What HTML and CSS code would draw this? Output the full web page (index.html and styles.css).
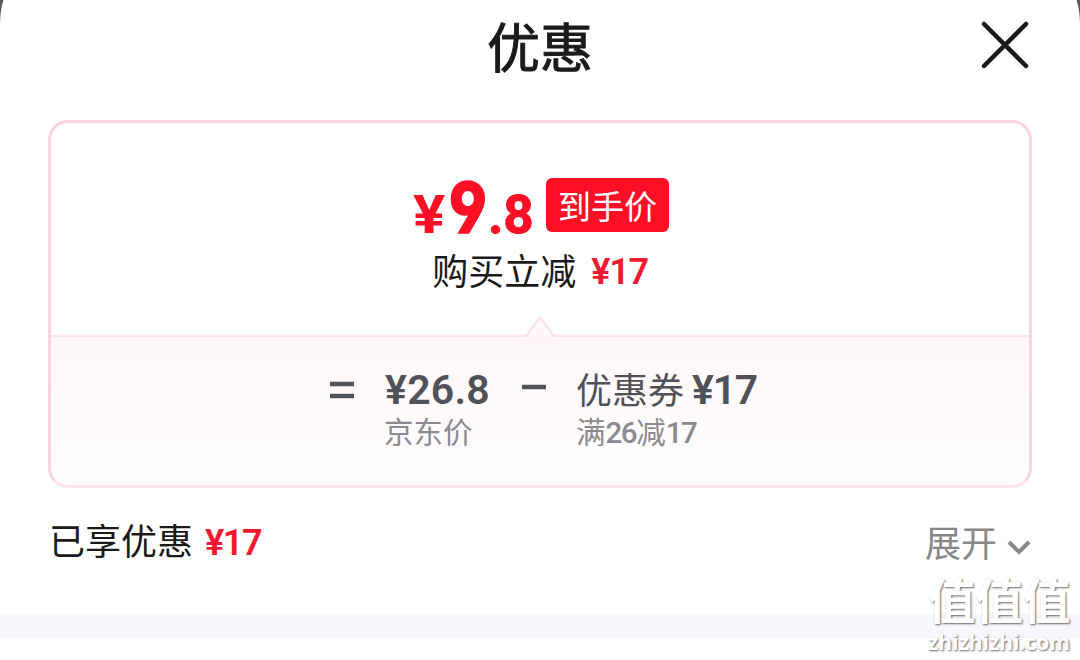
FILE: index.html
```
<!DOCTYPE html>
<html lang="zh-CN">
<head>
  <meta charset="UTF-8" />
  <meta name="viewport" content="width=device-width, initial-scale=1.0"/>
  <title>优惠</title>
  <link rel="stylesheet" href="styles.css">
</head>
<body>
  <div class="sheet">
    <header class="header">
      <h1>优惠</h1>
      <svg class="close" viewBox="0 0 48 48"><path d="M3 3L45 45M45 3L3 45" /></svg>
    </header>

    <!-- Price card -->
    <div class="card">
      <div class="summary">
        <div class="final">
          <span class="yen">¥</span><span class="big">9</span><span class="decimal">.8</span>
          <span class="tag">到手价</span>
        </div>
        <div class="saving">购买立减 <span class="num red">¥17</span></div>
      </div>
      <div class="formula">
        <svg class="arrow" viewBox="0 0 30 22"><path class="fill" d="M1 22L15 2L29 22Z" /><path class="line" d="M0 20.5H1.5L15 2L28.5 20.5H30" /></svg>
        <svg class="operator" viewBox="0 0 24 20"><path d="M0 3H24M0 15H24" /></svg>
        <div class="item origin">
          <div class="value"><span class="num">¥26.8</span></div>
          <div class="note">京东价</div>
        </div>
        <svg class="operator" viewBox="0 0 24 20"><path d="M0 6H24" /></svg>
        <div class="item coupon">
          <div class="value">优惠券<span class="num">¥17</span></div>
          <div class="note">满<b>26</b>减<b>17</b></div>
        </div>
      </div>
    </div>

    <div class="enjoyed">
      <div>已享优惠 <span class="num red">¥17</span></div>
      <div class="expand">展开 <svg viewBox="0 0 26 16"><path d="M3 3L13 13L23 3" /></svg></div>
    </div>
    <div class="divider"></div>
  </div>

  <!-- Watermark -->
  <div class="watermark">
    <div class="mark">值值值</div>
    <div class="site">zhizhizhi.com</div>
  </div>
</body>
</html>
```
FILE: styles.css
```
* {
  box-sizing: border-box;
}

body {
  margin: 0;
  height: 660px;
  overflow: hidden;
  position: relative;
  background: #59595b;
  color: #1a1a1a;
  font-family: Roboto, "Noto Sans CJK SC", sans-serif;
}

svg {
  fill: none;
  stroke: currentColor;
}

.sheet {
  height: 670px;
  margin-top: -10px;
  padding-top: 10px;
  border-radius: 12px 12px 0 0 / 34px 34px 0 0;
  background: #fff;
}

.header {
  height: 120px;
  display: grid;
  grid-template-columns: 1fr auto 1fr;
  padding: 0 51px;
}

h1 {
  grid-column: 2;
  margin: 12px 0 0;
  font-size: 53px;
  line-height: 76px;
  font-weight: 400;
  -webkit-text-stroke: 1px #1a1a1a;
}

.close {
  width: 48px;
  height: 48px;
  margin-top: 21px;
  justify-self: end;
  stroke-width: 4.5;
  stroke-linecap: round;
}

.card {
  height: 368px;
  margin: 0 48px;
  border: 3px solid #fdd5e0;
  border-bottom-color: #fde3ea;
  border-radius: 20px;
}

.summary {
  height: 212px;
  padding-top: 55px;
}

.final {
  display: flex;
  justify-content: center;
  height: 71px;
  padding-left: 2px;
  color: #fd1026;
  font-weight: 700;
}

.yen,
.decimal {
  font-size: 53px;
  line-height: 74px;
}

.yen {
  width: 36px;
  transform: scaleX(1.14);
  transform-origin: left;
}

.big {
  width: 39px;
  font-family: Inter, sans-serif;
  font-feature-settings: "ss01";
  font-size: 70px;
  font-weight: 800;
  line-height: 60px;
  -webkit-text-stroke: 1.5px #fd1026;
  transform: scaleX(0.86);
  transform-origin: left;
}

.decimal {
  width: 58px;
  -webkit-text-stroke: 1px #fd1026;
}

.tag {
  width: 123px;
  height: 54px;
  border-radius: 6px;
  background: #fd1026;
  color: #fff;
  font-size: 33px;
  line-height: 59px;
  font-weight: 400;
  text-align: center;
}

.saving {
  display: flex;
  justify-content: center;
  gap: 15px;
  font-size: 36px;
  line-height: 48px;
}

.saving .num {
  line-height: 46px;
}

.num {
  font-weight: 600;
  letter-spacing: -1.3px;
}

.red {
  color: #f31730;
}

.formula {
  height: 150px;
  position: relative;
  display: flex;
  justify-content: center;
  padding: 29px 0 0 6px;
  border-top: 2px solid #fde5eb;
  border-radius: 0 0 17px 17px;
  background: linear-gradient(#fff7f8, #fffcfd 80%);
  color: #505259;
}

.arrow {
  position: absolute;
  top: -22px;
  left: 474px;
  width: 30px;
  height: 22px;
}

.arrow .fill {
  fill: #fff7f8;
  stroke: none;
}

.arrow .line {
  stroke: #fde5eb;
  stroke-width: 2.5;
}

.operator {
  width: 26px;
  height: 20px;
  margin-top: 15px;
  stroke-width: 4.5;
}

.item {
  margin-left: 29px;
}

.origin {
  width: 137px;
}

.origin .num {
  margin-left: 1px;
  letter-spacing: 0.2px;
}

.coupon .num {
  margin-left: 8px;
}

.value {
  height: 47px;
  font-size: 36px;
  line-height: 48px;
  white-space: nowrap;
}

.value .num {
  font-size: 41px;
}

.note {
  color: #8a8b92;
  font-size: 29.5px;
  line-height: 40px;
}

.note b {
  font-weight: 500;
  letter-spacing: -1.5px;
}

.enjoyed {
  display: flex;
  justify-content: space-between;
  height: 126px;
  padding: 28px 48px 0 49px;
  font-size: 36px;
  line-height: 54px;
}

.enjoyed .num {
  margin-left: 3px;
}

.expand {
  padding-top: 2px;
  color: #888;
}

.expand svg {
  width: 26px;
  height: 16px;
  stroke-width: 4;
  vertical-align: 2px;
}

.divider {
  height: 24px;
  background: #f6f7fc;
}

.watermark {
  position: absolute;
  right: 9px;
  bottom: 0;
  width: 143px;
  height: 84px;
  color: #fff;
  font-weight: 700;
  white-space: nowrap;
  text-shadow: 1px 1px 2px #666;
}

.mark {
  font-size: 47.5px;
  line-height: 55px;
}

.site {
  font-family: "Open Sans", sans-serif;
  font-size: 21px;
  line-height: 22px;
}
```
